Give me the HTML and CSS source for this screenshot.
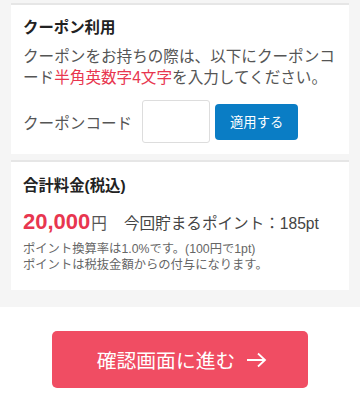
FILE: index.html
```html
<!doctype html>
<html>
<head>
<meta charset="utf-8">
<title>クーポン利用</title>
<link rel="stylesheet" href="styles.css">
</head>
<body>
<div class="page">
  <div class="card coupon">
    <p class="title">クーポン利用</p>
    <p class="lead">クーポンをお持ちの際は、以下にクーポンコード<span class="red">半角英数字4文字</span>を入力してください。</p>
    <div class="code-row">
      <span class="label">クーポンコード</span>
      <input class="code" type="text">
      <button class="apply">適用する</button>
    </div>
  </div>
  <div class="card total">
    <p class="title">合計料金(税込)</p>
    <p class="price"><span class="amount">20,000</span><span class="yen">円</span><span class="points">今回貯まるポイント：185pt</span></p>
    <p class="note">ポイント換算率は1.0%です。(100円で1pt)<br>ポイントは税抜金額からの付与になります。</p>
  </div>
</div>
<div class="footer">
  <button class="next">確認画面に進む<svg class="arrow" width="21" height="16" viewBox="0 0 21 16"><path d="M1 8H19M12 1.5L19 8L12 14.5" fill="none" stroke="#fff" stroke-width="1.8"/></svg></button>
</div>
</body>
</html>
```

FILE: styles.css
```css
body {
  margin: 0;
  background: #fff;
  color: #444;
  font-family: "Liberation Sans", "Noto Sans CJK JP", sans-serif;
  font-size: 15.6px;
}
p { margin: 0; }
.page {
  background: #f5f5f5;
  padding: 3px 11px 17px;
  display: flex;
  flex-direction: column;
  gap: 6px;
}
.card {
  background: #fff;
  border-top: 2px solid #e6e6e6;
  padding: 12px 12px 11px;
}
.title {
  color: #222;
  font-weight: bold;
  font-size: 15.4px;
  line-height: 22px;
}
.lead {
  margin-top: 7px;
  line-height: 21px;
  color: #555;
}
.red { color: #e8364f; }
.code-row {
  display: flex;
  align-items: center;
  margin-top: 12px;
}
.label {
  color: #555;
  margin-right: 10px;
}
.code {
  width: 68px;
  height: 43px;
  box-sizing: border-box;
  border: 1px solid #ddd;
  border-radius: 3px;
  margin: 0;
  padding: 0;
}
.apply {
  margin-left: 5px;
  width: 83px;
  height: 36px;
  border: none;
  border-radius: 4px;
  background: #0a7dc5;
  color: #fff;
  font-family: inherit;
  font-size: 13.3px;
  padding: 0;
}
.total { padding: 13px 12px 17px; }
.price {
  margin-top: 11px;
  line-height: 28px;
  display: flex;
  align-items: baseline;
}
.amount {
  color: #e8364f;
  font-weight: bold;
  font-size: 22px;
}
.yen { color: #555; margin-left: 1px; }
.points { color: #444; margin-left: 17px; }
.note {
  margin-top: 4px;
  font-size: 12.3px;
  line-height: 15.5px;
  color: #666;
}
.footer {
  display: flex;
  justify-content: center;
  padding-top: 24px;
}
.next {
  width: 256px;
  height: 57px;
  border: none;
  border-radius: 5px;
  background: #f04d63;
  color: #fff;
  font-family: inherit;
  font-size: 19.8px;
  display: flex;
  align-items: center;
  justify-content: center;
  gap: 11px;
  padding: 0 0 0 4px;
}
.arrow { display: block; }
```
